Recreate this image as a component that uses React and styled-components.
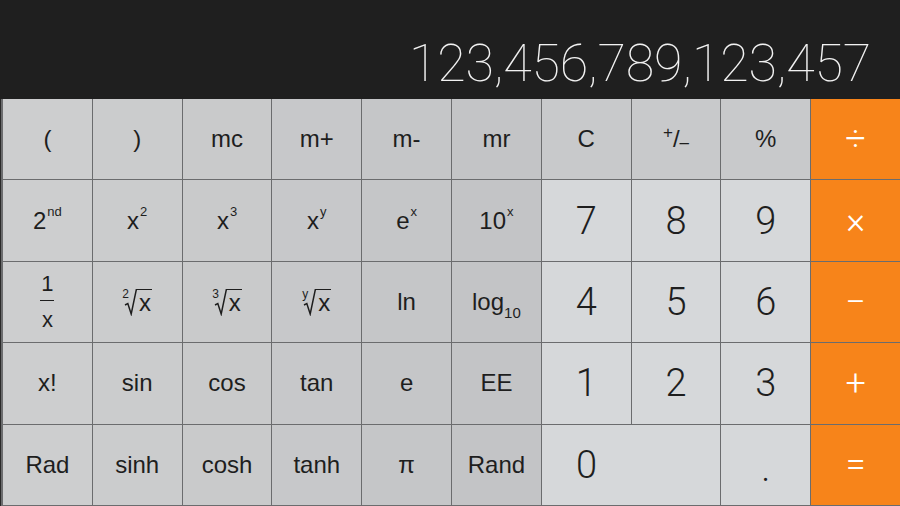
import React from "react";
import styled, { createGlobalStyle } from "styled-components";

const Global = createGlobalStyle`
  html, body { margin: 0; padding: 0; background: #1f1f1f; }
  * { box-sizing: border-box; }
`;

const Screen = styled.div`
  width: 900px;
  height: 506px;
  display: flex;
  flex-direction: column;
  background: #1f1f1f;
  overflow: hidden;
`;

const Display = styled.div`
  height: 99px;
  flex: none;
  display: flex;
  align-items: flex-end;
  justify-content: flex-end;
  padding: 0 29px 9px 0;
  color: #f2f2f2;
  font-family: "Roboto", "Inter", sans-serif;
  font-weight: 100;
  font-size: 52px;
  letter-spacing: -0.2px;
  line-height: 1;
`;

const Keys = styled.div`
  flex: 1;
  display: grid;
  grid-template-columns: repeat(10, 1fr);
  grid-template-rows: repeat(5, 1fr);
  gap: 1px;
  padding: 0 0 1px 2px;
  background: #6b6c6e;
  border-left: 1px solid #2a2a2a;
`;

const sciShades = ["#cdcecf", "#cbcccd", "#c9cacb", "#c7c8ca", "#c5c6c8", "#c3c4c6", "#c8c9cb", "#c8c9cb", "#c8c9cb"];

const bgFor = (kind, col) =>
  kind === "op" ? "#f7841a" : kind === "digit" ? "#d6d8da" : sciShades[col] || "#c9cacc";

const sizeFor = (kind) =>
  kind === "digit" ? "38px" : kind === "op" ? "36px" : "24px";

const Key = styled.div`
  background: ${(p) => bgFor(p.$kind, p.$col)};
  grid-column: span ${(p) => p.$span || 1};
  display: flex;
  align-items: ${(p) => (p.$low ? "flex-end" : "center")};
  padding-bottom: ${(p) => (p.$low ? "18px" : "0")};
  justify-content: ${(p) => (p.$span > 1 ? "flex-start" : "center")};
  color: ${(p) => (p.$kind === "op" ? "#ffffff" : "#1e1e1e")};
  font-family: ${(p) =>
    p.$kind === "sci"
      ? `"Liberation Sans", "Roboto", sans-serif`
      : `"Roboto", "Liberation Sans", sans-serif`};
  font-size: ${(p) => sizeFor(p.$kind)};
  font-weight: ${(p) => (p.$kind === "sci" ? 400 : 300)};
  line-height: 1;
`;

const Half = styled.span`
  width: 50%;
  text-align: center;
`;

const Pow = styled.span`
  display: inline-flex;
  align-items: flex-start;
  line-height: 24px;
`;

const Exp = styled.span`
  font-size: 13px;
  line-height: 13px;
  margin: -4px 0 0 1px;
`;

const SubPow = styled.span`
  display: inline-flex;
  align-items: flex-end;
  line-height: 24px;
`;

const SubExp = styled.span`
  font-size: 15px;
  line-height: 15px;
  margin-bottom: -6px;
`;

const Root = styled.span`
  display: inline-flex;
  align-items: flex-start;
  height: 28px;
`;

const RootIndex = styled.span`
  font-size: 12px;
  line-height: 12px;
  margin: 0 -5px 0 0;
`;

const RootSign = styled.svg`
  width: 13px;
  height: 28px;
  flex: none;
`;

const Radicand = styled.span`
  border-top: 1.5px solid #1e1e1e;
  padding: 0 1px 0 2px;
  margin-top: 1px;
  line-height: 26px;
`;

const Frac = styled.span`
  display: inline-flex;
  flex-direction: column;
  align-items: center;
  font-size: 22px;
  line-height: 1;
`;

const FracBar = styled.span`
  width: 14px;
  height: 1.5px;
  background: #1e1e1e;
  margin: 5px 0 8px;
`;

const PlusMinus = styled.span`
  display: inline-flex;
  align-items: center;
  height: 30px;
  font-size: 24px;
`;

const PMSmall = styled.span`
  font-size: 17px;
  line-height: 17px;
  align-self: ${(p) => (p.$up ? "flex-start" : "flex-end")};
  margin-bottom: ${(p) => (p.$up ? "0" : "3px")};
`;

const rt = (idx) => (
  <Root>
    <RootIndex>{idx}</RootIndex>
    <RootSign viewBox="0 0 13 28">
      <path
        d="M1 17 L3.8 15.6 L7.2 26 L12.3 1.8 L13 1.8"
        fill="none"
        stroke="#1e1e1e"
        strokeWidth="1.5"
      />
    </RootSign>
    <Radicand>x</Radicand>
  </Root>
);

const pw = (b, e) => (
  <Pow>
    {b}
    <Exp>{e}</Exp>
  </Pow>
);

const rows = [
  [
    ["sci", "("], ["sci", ")"], ["sci", "mc"], ["sci", "m+"], ["sci", "m-"], ["sci", "mr"],
    ["sci", "C"],
    ["sci", <PlusMinus><PMSmall $up>+</PMSmall>/<PMSmall>–</PMSmall></PlusMinus>],
    ["sci", "%"], ["op", "÷"],
  ],
  [
    ["sci", pw("2", "nd")], ["sci", pw("x", "2")], ["sci", pw("x", "3")],
    ["sci", pw("x", "y")], ["sci", pw("e", "x")], ["sci", pw("10", "x")],
    ["digit", "7"], ["digit", "8"], ["digit", "9"], ["op", "×"],
  ],
  [
    ["sci", <Frac>1<FracBar />x</Frac>], ["sci", rt("2")], ["sci", rt("3")], ["sci", rt("y")],
    ["sci", "ln"], ["sci", <SubPow>log<SubExp>10</SubExp></SubPow>],
    ["digit", "4"], ["digit", "5"], ["digit", "6"], ["op", "−"],
  ],
  [
    ["sci", "x!"], ["sci", "sin"], ["sci", "cos"], ["sci", "tan"], ["sci", "e"], ["sci", "EE"],
    ["digit", "1"], ["digit", "2"], ["digit", "3"], ["op", "+"],
  ],
  [
    ["sci", "Rad"], ["sci", "sinh"], ["sci", "cosh"], ["sci", "tanh"], ["sci", "π"], ["sci", "Rand"],
    ["digit", "0", 2], ["digit", ".", 1, true], ["op", "="],
  ],
];

export default function App() {
  return (
    <Screen>
      <Global />
      <Display>123,456,789,123,457</Display>
      <Keys>
        {rows.map((row, r) =>
          row.map(([kind, label, span, low], c) => (
            <Key key={`${r}-${c}`} $kind={kind} $span={span} $low={low} $col={c}>
              {span > 1 ? <Half>{label}</Half> : label}
            </Key>
          ))
        )}
      </Keys>
    </Screen>
  );
}
